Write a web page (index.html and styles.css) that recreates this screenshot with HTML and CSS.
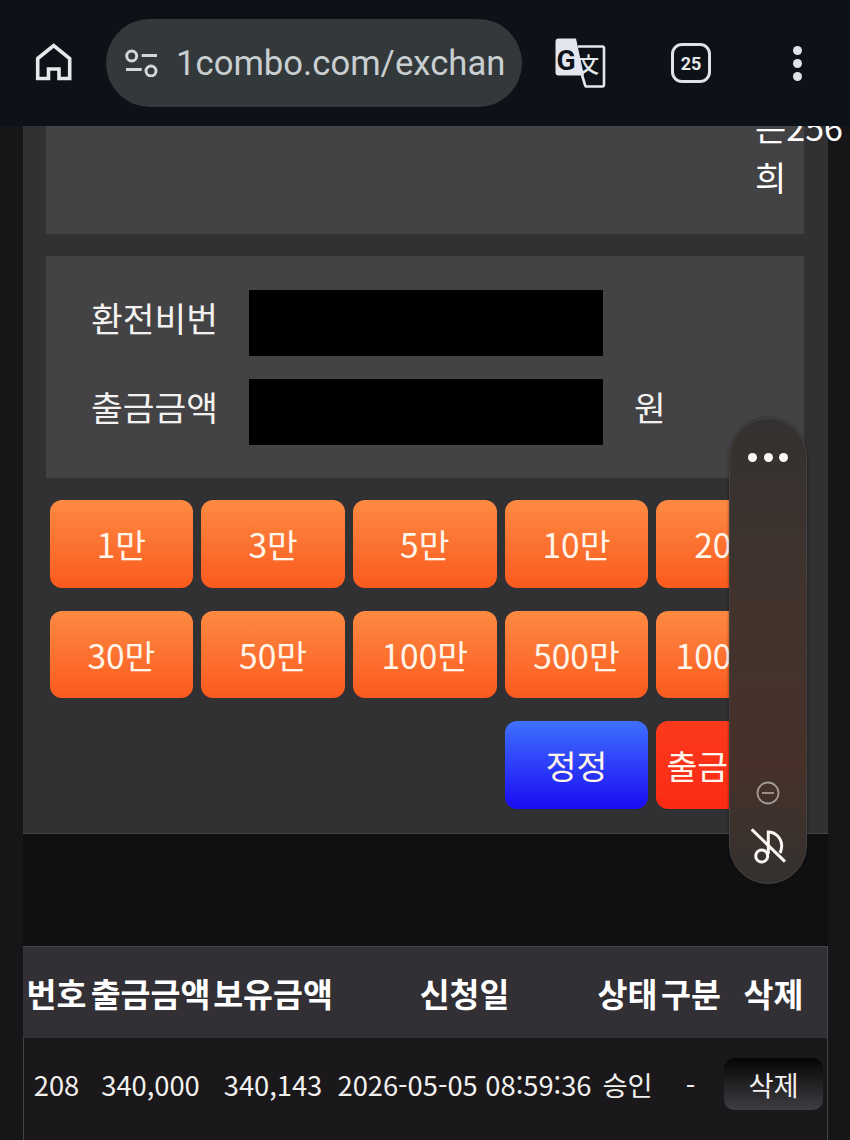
FILE: index.html
```html
<!DOCTYPE html>
<html lang="ko">
  <head>
    <meta charset="UTF-8" />
    <meta name="viewport" content="width=device-width, initial-scale=1.0" />
    <title>출금</title>
    <link rel="stylesheet" href="styles.css">
  </head>
  <body>
    <header class="toolbar">
      <div class="tool">
        <svg width="38" height="42" viewBox="0 0 38 42" fill="none" stroke="#e6e8ea" stroke-width="3.6">
          <path d="M3.700 16.500 19.700 3.500l16 13v20H25V27H14.500v9.500H3.700z" />
        </svg>
      </div>
      <div class="address">
        <svg width="34" height="28" viewBox="0 0 34 28" fill="none" stroke="#d3d7da" stroke-width="3">
          <circle cx="6.700" cy="7" r="5" />
          <path d="M16.700 6.500H32M1 20.500h15.700" />
          <circle cx="26" cy="22" r="5" />
        </svg>
        <span class="url">1combo.com/exchan</span>
      </div>
      <div class="tool">
        <svg width="52" height="52" viewBox="0 0 52 52">
          <path d="M24 9.500h24.500a1.500 1.500 0 0 1 1.500 1.500v37a1.500 1.500 0 0 1-1.500 1.500H31" fill="none" stroke="#e3e6ea" stroke-width="2.600" />
          <path d="M4.500 1.500H22l8 37H4.500a3 3 0 0 1-3-3V4.500a3 3 0 0 1 3-3z" fill="#e3e6ee" />
          <path d="M28 38l3.500 11.500" fill="none" stroke="#e3e6ea" stroke-width="2.600" />
          <text x="2.500" y="33" class="logo-g">G</text>
          <text x="24" y="35" class="logo-wen">文</text>
        </svg>
      </div>
      <div class="tool">
        <div class="tab-count">25</div>
      </div>
      <div class="tool menu-dots">
        <i></i><i></i><i></i>
      </div>
    </header>

    <main class="panel">
      <section class="notice">
        <p>은256</p>
        <p>희</p>
      </section>

      <section class="form-box">
        <div class="form-row">
          <label class="form-label">환전비번</label>
          <div class="masked"></div>
        </div>
        <div class="form-row">
          <label class="form-label">출금금액</label>
          <div class="masked"></div>
          <span class="unit">원</span>
        </div>
      </section>

      <section class="buttons">
        <button class="btn">1만</button>
        <button class="btn">3만</button>
        <button class="btn">5만</button>
        <button class="btn">10만</button>
        <button class="btn">20만</button>
        <button class="btn">30만</button>
        <button class="btn">50만</button>
        <button class="btn">100만</button>
        <button class="btn">500만</button>
        <button class="btn">1000만</button>
        <button class="btn btn-blue">정정</button>
        <button class="btn btn-red">출금신청</button>
      </section>
    </main>

    <div class="spacer"></div>

    <section class="history">
      <table>
        <colgroup>
          <col class="col-no">
          <col class="col-amount">
          <col class="col-balance">
          <col class="col-date">
          <col class="col-status">
          <col class="col-type">
          <col class="col-del">
        </colgroup>
        <thead>
          <tr>
            <th>번호</th>
            <th>출금금액</th>
            <th>보유금액</th>
            <th>신청일</th>
            <th>상태</th>
            <th>구분</th>
            <th>삭제</th>
          </tr>
        </thead>
        <tbody>
          <tr>
            <td>208</td>
            <td>340,000</td>
            <td>340,143</td>
            <td>2026-05-05 08:59:36</td>
            <td>승인</td>
            <td>-</td>
            <td><button class="del-button">삭제</button></td>
          </tr>
        </tbody>
      </table>
    </section>

    <aside class="float-bar">
      <div class="float-dots"><i></i><i></i><i></i></div>
      <svg class="float-minus" width="24" height="24" viewBox="0 0 24 24" fill="none" stroke="#a29a95" stroke-width="1.800">
        <circle cx="12" cy="12" r="10.500" />
        <path d="M6 12h12" />
      </svg>
      <svg class="float-note" width="40" height="40" viewBox="0 0 40 40" fill="none" stroke="#fbf7f3" stroke-width="3">
        <circle cx="13.700" cy="29" r="6" />
        <path d="M20.300 27V5c7 0 13.400 6 13.400 14 0 3-.7 5-1.700 7" />
        <path d="M3.700 2.300 37 34.700" />
      </svg>
    </aside>
  </body>
</html>
```

FILE: styles.css
```css
* {
  box-sizing: border-box;
}

html,
body {
  margin: 0;
  height: 1140px;
  overflow: hidden;
}

body {
  position: relative;
  display: flex;
  flex-direction: column;
  background-color: #161518;
  color: #fff;
  font-family: "Noto Sans CJK KR", "Noto Sans", sans-serif;
}

/* browser bar */
.toolbar {
  position: relative;
  z-index: 2;
  flex: none;
  display: flex;
  align-items: center;
  height: 126px;
  background-color: #0d1218;
}

.tool {
  flex: none;
  display: flex;
  align-items: center;
  justify-content: center;
  width: 106px;
}

.toolbar .tool:nth-of-type(3) {
  width: 116px;
}

.address {
  flex: none;
  display: flex;
  align-items: center;
  gap: 17px;
  width: 416px;
  height: 88px;
  padding: 0 10px 0 19px;
  border-radius: 44px;
  background-color: #33383b;
}

.address svg {
  flex: none;
}

.url {
  white-space: nowrap;
  color: #c9ced1;
  font-family: Roboto, sans-serif;
  font-size: 34.700px;
}

.logo-g {
  fill: #0d1218;
  font-family: Roboto, sans-serif;
  font-size: 28px;
  font-weight: 700;
}

.logo-wen {
  fill: #e3e6ea;
  font-family: "Noto Sans CJK SC", sans-serif;
  font-size: 21px;
  font-weight: 500;
}

.tab-count {
  display: flex;
  align-items: center;
  justify-content: center;
  width: 40px;
  height: 40px;
  border: 3.500px solid #dfe2e6;
  border-radius: 11px;
  color: #e6e8ea;
  font-family: Roboto, sans-serif;
  font-size: 18px;
  font-weight: 700;
}

.menu-dots {
  flex-direction: column;
  gap: 4px;
}

.menu-dots i {
  width: 9px;
  height: 9px;
  border-radius: 50%;
  background-color: #dfe2e6;
}

/* main panel */
.panel {
  flex: none;
  width: 805px;
  margin-left: 23px;
  padding: 0 24px 24px 23px;
  border-bottom: 1px solid #454447;
  background-color: #313033;
}

.notice {
  height: 108px;
  padding: 2px 0 0 709px;
  background-color: #434244;
  font-size: 34px;
  line-height: 50px;
  white-space: nowrap;
}

.notice p {
  margin: 0;
  position: relative;
  top: -26px;
}

.form-box {
  margin-top: 22px;
  padding: 34px 0 33px 45px;
  background-color: #434244;
}

.form-row {
  display: flex;
  align-items: center;
  height: 66px;
  font-size: 34.500px;
}

.form-row + .form-row {
  margin-top: 23px;
}

.form-label {
  width: 158px;
  padding-bottom: 12px;
  color: #f4f2f0;
}

.masked {
  width: 354px;
  height: 66px;
  background-color: #000;
}

.unit {
  margin-left: 31px;
  padding-bottom: 12px;
  color: #f4f2f0;
}

.buttons {
  display: grid;
  grid-template-columns: repeat(5, 143.700px);
  grid-auto-rows: 87.600px;
  gap: 23px 8px;
  margin-top: 22px;
  padding-left: 3.600px;
}

.btn {
  padding: 0;
  border: none;
  border-radius: 12px;
  background: linear-gradient(#fd8a42, #fb5a1e);
  color: #fff5ea;
  font-family: inherit;
  font-size: 33.500px;
  white-space: nowrap;
}

.btn-blue {
  grid-column-start: 4;
  background: linear-gradient(#3f70ff, #1a0cf2);
}

.btn-red {
  background: linear-gradient(#fb3a1c, #fb2a14);
}

.spacer {
  flex: none;
  width: 805px;
  height: 112px;
  margin-left: 23px;
  background-color: #100f11;
}

/* withdrawal history */
.history {
  flex: 1;
  width: 805px;
  margin-left: 23px;
  border: 1px solid #454447;
  border-bottom: none;
  background-color: #1a181b;
}

table {
  width: 804px;
  margin-left: -1px;
  table-layout: fixed;
  border-collapse: collapse;
  text-align: center;
}

.col-no { width: 67px; }
.col-amount { width: 121px; }
.col-balance { width: 124px; }
.col-date { width: 259px; }
.col-status { width: 67px; }
.col-type { width: 59px; }
.col-del { width: 107px; }

th {
  height: 91px;
  padding: 0;
  background-color: #323034;
  font-size: 32.500px;
  font-weight: 700;
  white-space: nowrap;
}

td {
  height: 92px;
  padding: 0;
  color: #f2f0ee;
  font-size: 27.300px;
  white-space: nowrap;
}

.del-button {
  width: 99px;
  height: 52px;
  padding: 0;
  border: none;
  border-radius: 10px;
  background: linear-gradient(#050406, #3f3d41);
  color: #f2f0ee;
  font-family: inherit;
  font-size: 27.300px;
}

/* floating side bar */
.float-bar {
  position: absolute;
  z-index: 3;
  top: 418px;
  left: 729px;
  display: flex;
  flex-direction: column;
  align-items: center;
  width: 78px;
  height: 466px;
  padding: 34px 0 16px;
  border: 1px solid #45423f;
  border-radius: 39px;
  background: linear-gradient(#333130, #42332d 40%, #47312a 75%, #33312f);
  box-shadow: 0 0 3px rgba(0, 0, 0, 0.5);
}

.float-dots {
  display: flex;
  gap: 6.500px;
}

.float-dots i {
  width: 9px;
  height: 9px;
  border-radius: 50%;
  background-color: #fdf9f5;
}

.float-minus {
  margin-top: auto;
}

.float-note {
  margin-top: 22px;
}
```
